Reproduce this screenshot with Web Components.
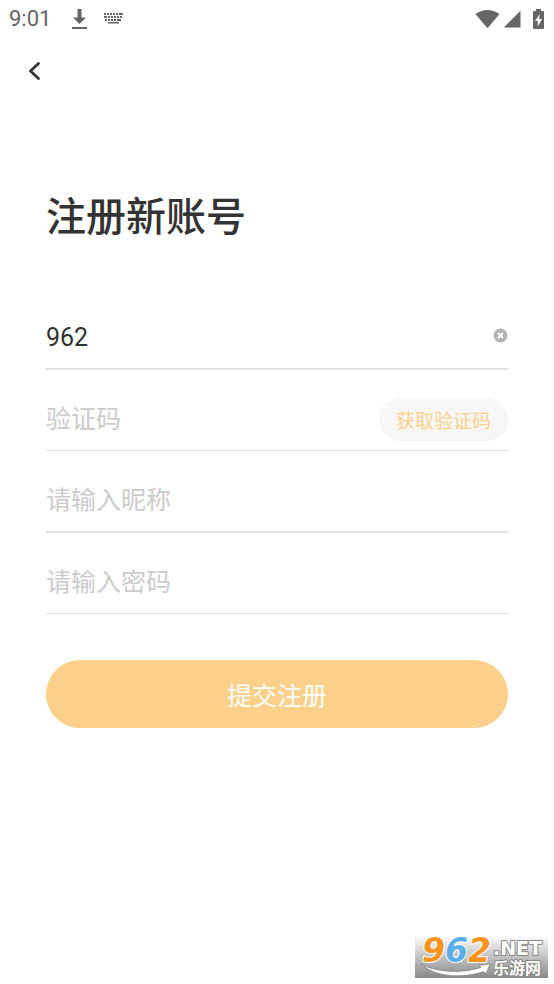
<!DOCTYPE html>
<html lang="zh-CN">
<head>
<meta charset="utf-8">
<meta name="viewport" content="width=device-width, initial-scale=1">
<title>注册新账号</title>
<style>
html, body { margin: 0; background: #fff; }
body { font-family: Roboto, "Noto Sans CJK SC", sans-serif; color: #333; }
</style>
</head>
<body>
<register-page></register-page>
<script>
const define = (name, html, setup) => {
  const template = document.createElement('template');
  template.innerHTML = html;
  customElements.define(name, class extends HTMLElement {
    constructor() {
      super();
      this.attachShadow({ mode: 'open' }).append(template.content.cloneNode(true));
    }
    connectedCallback() { if (setup) setup(this, this.shadowRoot); }
  });
};

define('status-bar', `
<style>
:host { display: flex; align-items: center; height: 38px; padding: 0 9px; color: #666; font-size: 22px; line-height: 38px; }
svg { display: block; fill: currentColor; }
.left, .right { display: flex; align-items: center; }
.left { flex: 1; gap: 16px; }
.time { margin-right: 4px; }
.right { gap: 3px; }
.battery { margin-left: 8px; }
</style>
<div class="left">
  <span class="time">9:01</span>
  <svg width="17" height="22" viewBox="0 0 17 22"><path d="M6.500 1h4v8.500h4.500l-6.500 6.500-6.500-6.500h4.500zM1 19h15v2H1z"/></svg>
  <svg width="20" height="12" viewBox="0 0 20 12"><path d="M0 0h2v2H0zM3 0h2v2H3zM6 0h2v2H6zM9 0h2v2H9zM12 0h2v2h-2zM15 0h4v2h-4zM0 3h3v2H0zM4 3h2v2H4zM7 3h2v2H7zM10 3h2v2h-2zM13 3h2v2h-2zM16 3h2v2h-2zM1 6h2v2H1zM4 6h2v2H4zM7 6h2v2H7zM10 6h2v2h-2zM13 6h4v2h-4zM4 9h11v1.500H4z"/></svg>
</div>
<div class="right">
  <svg width="25" height="20" viewBox="0 0 25 20"><path d="M.5 5Q12.500-3 24.500 5L13.200 18.500q-.7.700-1.400 0z"/></svg>
  <svg width="18" height="18" viewBox="0 0 18 18"><path d="M17.500.8V17.500H.8z"/></svg>
  <svg class="battery" width="13" height="20" viewBox="0 0 11 20"><path fill-rule="evenodd" d="M3 0h5v2h2q1 0 1 1v16q0 1-1 1H1q-1 0-1-1V3q0-1 1-1h2zM6.700 5 2 12h2.800v5.500L9 10H6.200z"/></svg>
</div>`);

define('nav-bar', `
<style>
:host { display: flex; align-items: center; height: 66px; padding: 0 20px; }
button { display: flex; padding: 6px; border: 0; background: none; cursor: pointer; }
svg { display: block; }
</style>
<button type="button" aria-label="返回">
  <svg width="18" height="20" viewBox="0 0 18 20" fill="none" stroke="#333" stroke-width="2.800" stroke-linecap="round" stroke-linejoin="round"><path d="M12.500 2.500 4.500 10l8 7.500"/></svg>
</button>`);

define('form-field', `
<style>
:host { display: flex; align-items: center; height: 80px; border-bottom: 1px solid #e2e2e5; }
:host([strong]) { border-bottom-width: 2px; }
input { flex: 1; min-width: 0; height: 40px; margin: 20px 0 0; padding: 0; border: 0; outline: 0; background: none; font: inherit; font-size: 25px; line-height: 40px; color: #333; }
input::placeholder { color: #ccc; opacity: 1; }
</style>
<input>
<slot></slot>`, (host, root) => {
  const input = root.querySelector('input');
  input.type = host.getAttribute('type') || 'text';
  input.value = host.getAttribute('value') || '';
  input.placeholder = host.getAttribute('placeholder') || '';
  input.setAttribute('aria-label', host.getAttribute('label'));
});

define('clear-button', `
<style>
:host { display: block; }
button { display: block; margin: 14px 0 0; padding: 0; border: 0; background: none; cursor: pointer; }
svg { display: block; }
</style>
<button type="button" aria-label="清除">
  <svg width="15" height="15" viewBox="0 0 15 15"><circle cx="7.500" cy="7.500" r="7" fill="#b5b5b5"/><path d="m5 5 5 5m0-5-5 5" stroke="#fff" stroke-width="1.800"/></svg>
</button>`);

define('code-button', `
<style>
:host { display: block; }
button { display: block; height: 43px; margin: 18px 0 0; padding: 0 17px; border: 0; border-radius: 22px; background: #f7f7f7; color: #fad08a; font: inherit; font-size: 19px; cursor: pointer; }
</style>
<button type="button"><slot></slot></button>`);

define('submit-button', `
<style>
:host { display: block; }
button { display: block; width: 100%; height: 68px; padding: 0; border: 0; border-radius: 34px; background: #fad08a; color: #fff; font: inherit; font-size: 25px; cursor: pointer; }
</style>
<button type="button"><slot></slot></button>`);

define('site-mark', `
<style>
:host { display: block; }
svg { display: block; overflow: visible; }
text { paint-order: stroke; stroke-linejoin: round; }
.num { font: italic bold 33px "DejaVu Sans", sans-serif; stroke: #fff; stroke-width: 2px; }
.net { font: bold 19px "DejaVu Sans", sans-serif; fill: #fff; stroke: #888; stroke-width: 2px; }
.cn { font: bold 16px "Noto Sans CJK SC", sans-serif; fill: #fff; stroke: #888; stroke-width: 2px; }
</style>
<svg width="133" height="43" viewBox="0 0 133 43">
  <defs><linearGradient id="g" x1="0" y1="0" x2="0" y2="1"><stop offset="0" stop-color="#fff"/><stop offset=".5" stop-color="#c4c4c4"/><stop offset="1" stop-color="#888"/></linearGradient></defs>
  <rect width="133" height="43" fill="url(#g)"/>
  <path d="M6 29C20 37 46 39 66 32.500L64 30.500 75 29 71 39 69 36.500C46 44 20 42 6 29z" fill="#fff" stroke="#888" stroke-width=".8"/>
  <text class="num" x="7" y="27"><tspan fill="#f7941d">9</tspan><tspan fill="#5ab0e6">6</tspan><tspan fill="#f7941d">2</tspan></text>
  <text class="net" x="78" y="20">.NET</text>
  <text class="cn" x="78" y="39">乐游网</text>
</svg>`);

define('register-page', `
<style>
:host { display: block; position: relative; min-height: 100vh; }
main { padding: 82px 46px 0; }
h1 { margin: 0; font-size: 40px; line-height: 64px; font-weight: 500; }
form { margin-top: 38px; }
submit-button { margin-top: 46px; }
site-mark { position: absolute; right: 6px; bottom: 6px; }
</style>
<status-bar></status-bar>
<nav-bar></nav-bar>
<main>
  <h1>注册新账号</h1>
  <form>
    <form-field strong label="账号" value="962"><clear-button></clear-button></form-field>
    <form-field label="验证码" placeholder="验证码"><code-button>获取验证码</code-button></form-field>
    <form-field strong label="昵称" placeholder="请输入昵称"></form-field>
    <form-field type="password" label="密码" placeholder="请输入密码"></form-field>
    <submit-button>提交注册</submit-button>
  </form>
</main>
<site-mark></site-mark>`);
</script>
</body>
</html>
